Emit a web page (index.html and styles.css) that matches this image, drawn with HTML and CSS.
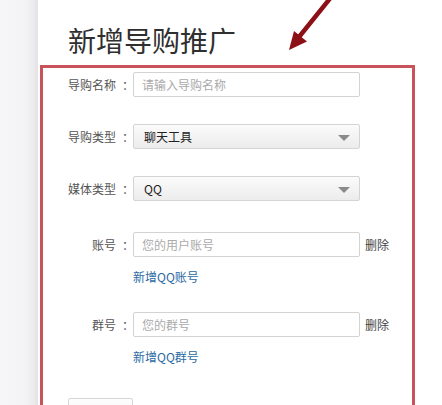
FILE: index.html
```html
<!DOCTYPE html>
<html lang="zh-CN">
<head>
<meta charset="utf-8">
<title>新增导购推广</title>
<link rel="stylesheet" href="styles.css">
</head>
<body>
<div class="page">
  <aside class="side"></aside>
  <main class="main">
    <h1 class="title">新增导购推广</h1>
    <section class="box">
      <div class="row r1">
        <label class="lbl">导购名称<span class="colon">：</span></label>
        <input class="inp" type="text" placeholder="请输入导购名称">
      </div>
      <div class="row r2">
        <label class="lbl">导购类型<span class="colon">：</span></label>
        <div class="sel"><span>聊天工具</span><i class="caret"></i></div>
      </div>
      <div class="row r3">
        <label class="lbl">媒体类型<span class="colon">：</span></label>
        <div class="sel"><span>QQ</span><i class="caret"></i></div>
      </div>
      <div class="row r4">
        <label class="lbl">账号<span class="colon">：</span></label>
        <input class="inp" type="text" placeholder="您的用户账号">
        <span class="del">删除</span>
      </div>
      <div class="add a1"><a class="link">新增QQ账号</a></div>
      <div class="row r5">
        <label class="lbl">群号<span class="colon">：</span></label>
        <input class="inp" type="text" placeholder="您的群号">
        <span class="del">删除</span>
      </div>
      <div class="add a2"><a class="link">新增QQ群号</a></div>
      <div class="actions">
        <button class="btn">保存</button>
        <span class="cancel">取消</span>
      </div>
    </section>
  </main>
</div>
<svg class="arrow" width="442" height="60" viewBox="0 0 442 60">
  <line x1="332" y1="-4" x2="299" y2="37" stroke="#8c1117" stroke-width="4.5" stroke-linecap="round"/>
  <polygon points="289,50 294,31 307,41.5" fill="#8c1117"/>
</svg>
</body>
</html>
```
FILE: styles.css
```css
html, body {
  margin: 0;
  padding: 0;
  background: #fff;
  font-family: "Noto Sans CJK SC", "Noto Sans", sans-serif;
  font-size: 12px;
  color: #333;
  overflow: hidden;
}
.page {
  display: flex;
  height: 405px;
}
.side {
  width: 38px;
  flex: none;
  background: linear-gradient(to right, #f6f6f8 0, #f3f3f5 26px, #ebebed 34px, #e2e2e4 38px);
}
.main {
  flex: 1;
  display: flex;
  flex-direction: column;
}
.title {
  margin: 0;
  padding: 25px 0 0 30px;
  font-size: 28px;
  line-height: 30px;
  font-weight: 400;
  color: #2f2f2f;
}
.box {
  margin: 10px 0 0 2px;
  width: 375px;
  box-sizing: border-box;
  flex: 1;
  border: 3px solid #c9535a;
  border-bottom: none;
  padding: 4px 0 0 25px;
}
.row {
  display: flex;
  align-items: center;
  height: 25px;
}
.r2 { margin-top: 27px; }
.r3 { margin-top: 27px; }
.r4 { margin-top: 31px; }
.r5 { margin-top: 26px; }
.lbl {
  width: 64px;
  margin-right: 1px;
  display: flex;
  justify-content: flex-end;
  color: #555;
  white-space: nowrap;
}
.colon {
  display: inline-block;
  width: 16px;
  text-indent: 6px;
}
.inp {
  width: 227px;
  height: 25px;
  box-sizing: border-box;
  border: 1px solid #d3d3d3;
  border-radius: 2px;
  padding: 0 8px;
  font-family: inherit;
  font-size: 12px;
  color: #333;
  outline: none;
  margin: 0;
}
.inp::placeholder {
  color: #aaa;
}
.sel {
  position: relative;
  width: 227px;
  height: 25px;
  box-sizing: border-box;
  border: 1px solid #d4d4d4;
  border-radius: 2px;
  background: linear-gradient(#fbfbfb, #ececec);
  display: flex;
  align-items: center;
  padding-left: 10px;
  color: #222;
}
.caret {
  position: absolute;
  right: 9px;
  top: 10px;
  width: 0;
  height: 0;
  border-left: 6px solid transparent;
  border-right: 6px solid transparent;
  border-top: 6px solid #8a8a8a;
}
.del {
  margin-left: 5px;
  color: #444;
}
.add {
  padding-left: 65px;
  height: 18px;
  line-height: 18px;
}
.a1 { margin-top: 11px; }
.a2 { margin-top: 11px; }
.link {
  color: #2b6aa2;
  cursor: pointer;
}
.actions {
  margin-top: 32px;
  display: flex;
  align-items: flex-start;
}
.btn {
  width: 65px;
  height: 26px;
  box-sizing: border-box;
  border: 1px solid #d6d6d6;
  border-radius: 2px;
  background: linear-gradient(#fdfdfd, #f1f1f1);
  font-family: inherit;
  font-size: 12px;
  color: #999;
  margin: 0;
  padding: 0;
}
.cancel {
  margin-left: 10px;
  color: #aaa;
  line-height: 26px;
}
.arrow {
  position: absolute;
  left: 0;
  top: 0;
}
```
